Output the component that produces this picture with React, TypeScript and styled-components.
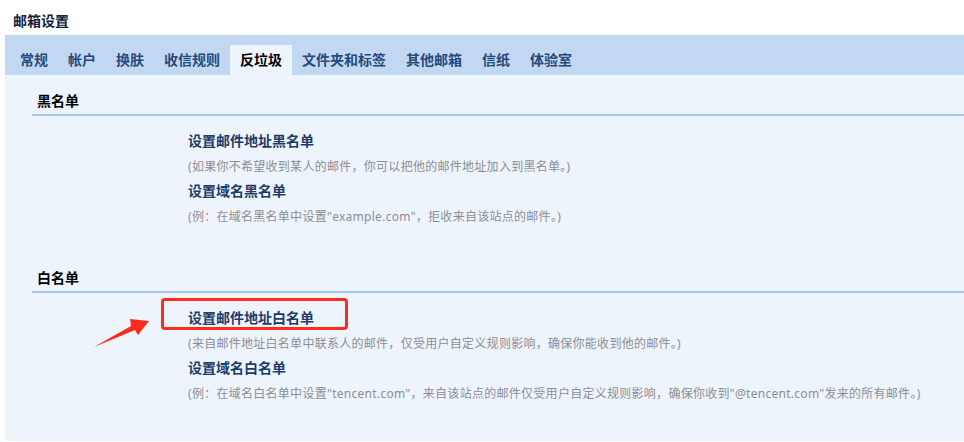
import React from "react";
import styled, { createGlobalStyle } from "styled-components";

const GlobalStyle = createGlobalStyle`
  body {
    margin: 0;
    background: #fff;
    font-family: "Noto Sans", "Noto Sans CJK SC", sans-serif;
  }
`;

const tabs = [
  "常规",
  "帐户",
  "换肤",
  "收信规则",
  "反垃圾",
  "文件夹和标签",
  "其他邮箱",
  "信纸",
  "体验室",
];

interface Entry {
  title: string;
  hint: string;
  highlight?: boolean;
}

const sections: { name: string; entries: Entry[] }[] = [
  {
    name: "黑名单",
    entries: [
      {
        title: "设置邮件地址黑名单",
        hint: "(如果你不希望收到某人的邮件，你可以把他的邮件地址加入到黑名单。)",
      },
      {
        title: "设置域名黑名单",
        hint: "(例：在域名黑名单中设置\"example.com\"，拒收来自该站点的邮件。)",
      },
    ],
  },
  {
    name: "白名单",
    entries: [
      {
        title: "设置邮件地址白名单",
        hint: "(来自邮件地址白名单中联系人的邮件，仅受用户自定义规则影响，确保你能收到他的邮件。)",
        highlight: true,
      },
      {
        title: "设置域名白名单",
        hint: "(例：在域名白名单中设置\"tencent.com\"，来自该站点的邮件仅受用户自定义规则影响，确保你收到\"@tencent.com\"发来的所有邮件。)",
      },
    ],
  },
];

const Page = styled.div`
  display: flex;
  flex-direction: column;
  height: 441px;
`;

const Title = styled.h1`
  margin: 0;
  height: 35px;
  padding-left: 13px;
  line-height: 42px;
  font-size: 14px;
  font-weight: 700;
  color: #13213a;
`;

const TabBar = styled.nav`
  display: flex;
  align-items: flex-end;
  height: 40px;
  margin-left: 5px;
  padding-left: 5px;
  background: #c2d8f2;
`;

const Tab = styled.div<{ $active?: boolean }>`
  height: 30px;
  padding: 0 10px;
  line-height: 30px;
  font-size: 14px;
  font-weight: 700;
  color: ${(p) => (p.$active ? "#000" : "#274a7c")};
  background: ${(p) => (p.$active ? "#eef4fc" : "transparent")};
  cursor: pointer;
`;

const Content = styled.main`
  flex: 1;
  margin-left: 5px;
  background: #eef4fc;
`;

const Section = styled.section`
  margin-left: 27px;
`;

const Heading = styled.h2`
  margin: 0;
  padding: 16px 0 3px 5px;
  line-height: 20px;
  font-size: 14px;
  font-weight: 700;
  color: #000;
  border-bottom: 2px solid #a8c6ea;
`;

const Items = styled.div`
  padding: 12px 0 24px 156px;
`;

const Row = styled.div`
  position: relative;
  height: 25px;
  line-height: 25px;
  white-space: nowrap;
`;

const LinkText = styled.a`
  font-size: 14px;
  font-weight: 700;
  color: #1c3b69;
  text-decoration: none;
  cursor: pointer;
`;

const Hint = styled.span`
  font-size: 12px;
  letter-spacing: 0.28px;
  color: #8b8e94;
`;

/* red frame and arrow pointing at the highlighted entry */
const Marker = styled.div`
  position: absolute;
  left: -27px;
  top: -7px;
  width: 181px;
  height: 26px;
  border: 3px solid #fd2a20;
  border-radius: 4px;
  pointer-events: none;
`;

const Pointer = styled.svg`
  position: absolute;
  left: -94px;
  top: 0;
  pointer-events: none;
`;

const App: React.FC = () => (
  <>
    <GlobalStyle />
    <Page>
      <Title>邮箱设置</Title>
      <TabBar>
        {tabs.map((t) => (
          <Tab key={t} $active={t === "反垃圾"}>
            {t}
          </Tab>
        ))}
      </TabBar>
      <Content>
        {sections.map((s) => (
          <Section key={s.name}>
            <Heading>{s.name}</Heading>
            <Items>
              {s.entries.map((e) => (
                <React.Fragment key={e.title}>
                  <Row>
                    <LinkText>{e.title}</LinkText>
                    {e.highlight && (
                      <>
                        <Marker />
                        <Pointer width="60" height="45" viewBox="0 0 60 45">
                          <polygon
                            points="0,42 37,21 36,14 55,16 44,30 41,25"
                            fill="#fd2a20"
                          />
                        </Pointer>
                      </>
                    )}
                  </Row>
                  <Row>
                    <Hint>{e.hint}</Hint>
                  </Row>
                </React.Fragment>
              ))}
            </Items>
          </Section>
        ))}
      </Content>
    </Page>
  </>
);

export default App;
